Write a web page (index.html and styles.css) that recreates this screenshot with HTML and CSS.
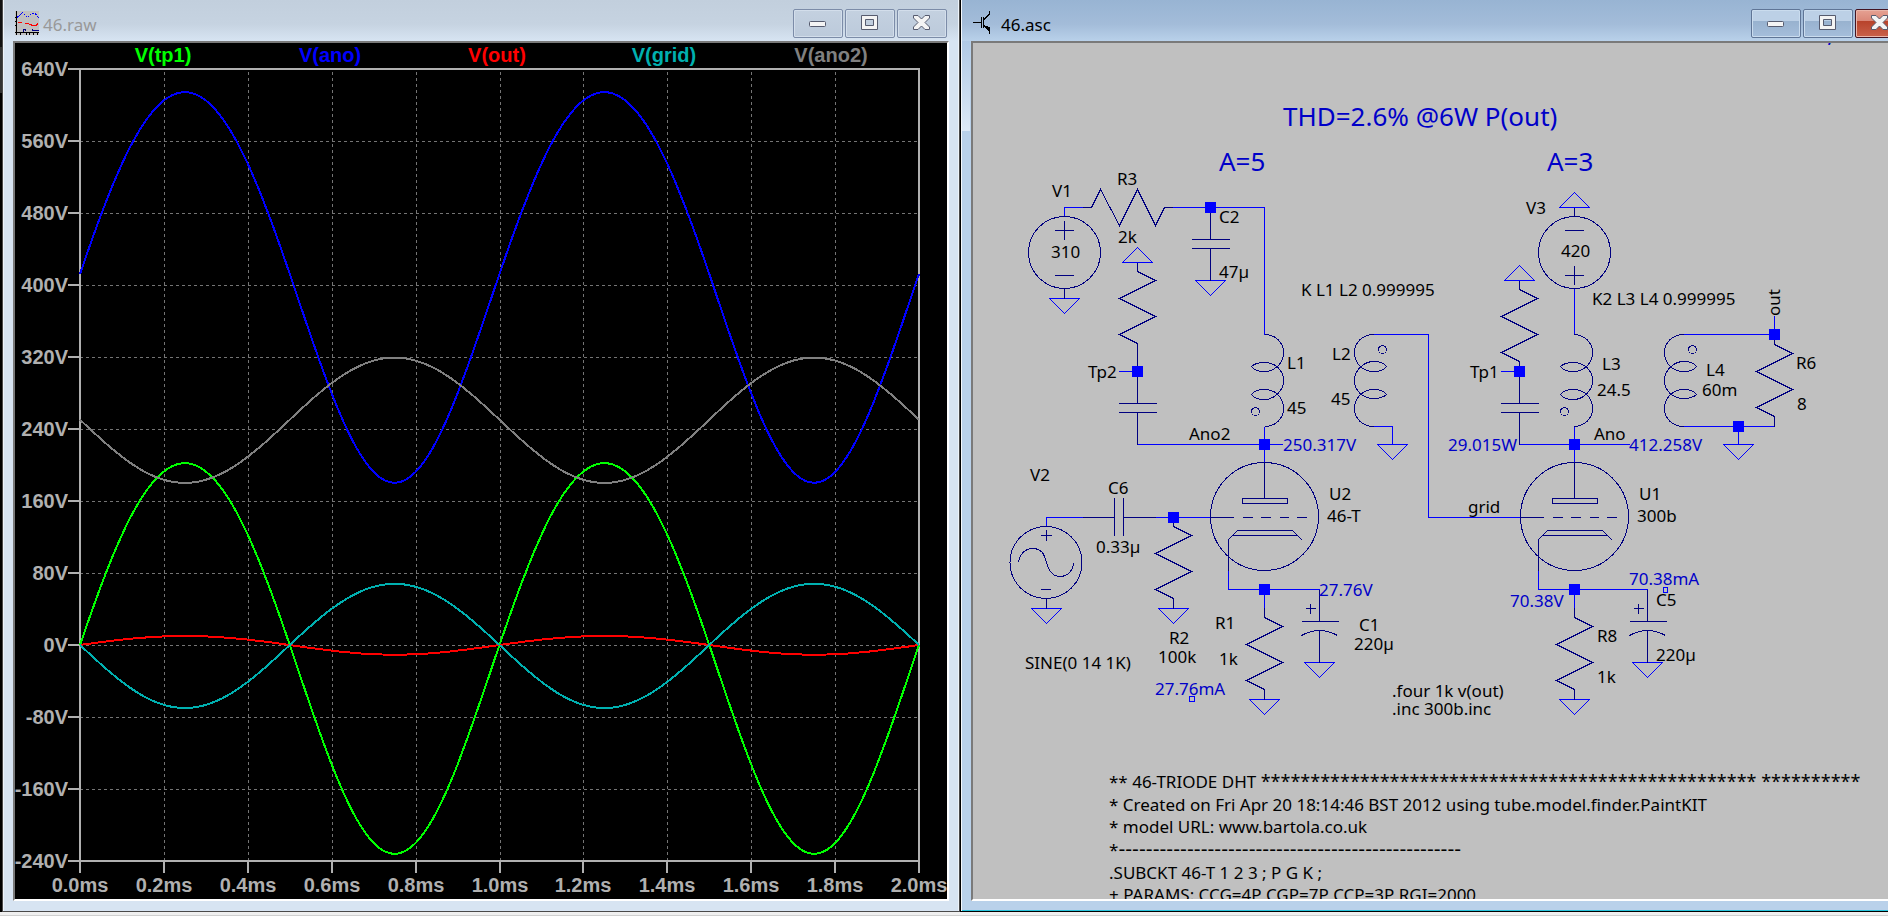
FILE: index.html
```html
<!DOCTYPE html>
<html lang="en">
<head>
    <meta charset="UTF-8">
    <meta name="viewport" content="width=device-width, initial-scale=1.0">
    <title>46.asc</title>
    <link rel="stylesheet" href="styles.css">
</head>
<body>
    <main class="desktop">
        <!-- Waveform window -->
        <section class="window inactive">
            <header class="titlebar">
                <svg class="app-icon" viewBox="0 0 24 24" shape-rendering="crispEdges" aria-hidden="true">
                    <rect width="24" height="24" fill="#c0c0c0"/>
                    <path d="M1.500 0V24M0 21.500H24M0 6.500H2M0 10.500H2M0 14.500H2M5.500 21V24M11.500 21V24M14.500 21V24M18.500 21V24M22.500 21V24" stroke="#000" fill="none"/>
                    <path d="M2 6.500L7.500 1.500L12.500 6.500L16.500 2.500H20L24 7" stroke="#0000ff" fill="none" stroke-dasharray="2 1"/>
                    <path d="M3 11.500H7M10 12.500H13L15 13.500L18 14.500H21L23 12.500" stroke="#ff0000" fill="none"/>
                    <path d="M8.500 21V18.500H10.500V20M17.500 18V20M17 19.500H24" stroke="#000080" fill="none"/>
                </svg>
                <h1 class="title">46.raw</h1>
                <div class="controls">
                    <button class="control" type="button" aria-label="Minimize">
                        <svg viewBox="1 0 20 20"><rect class="glyph" x="2.500" y="8.500" width="16" height="5" rx="1"/></svg>
                    </button>
                    <button class="control" type="button" aria-label="Maximize">
                        <svg viewBox="1 0 20 20"><path class="glyph" fill-rule="evenodd" d="M2.500 2.500H18.500V16.500H2.500ZM6.500 6.500V12.500H14.500V6.500Z"/></svg>
                    </button>
                    <button class="control close" type="button" aria-label="Close">
                        <svg viewBox="1 0 20 20"><path class="glyph" d="M2.500 2.500H7L10.500 6L14 2.500H18.500V5L14 9.500L18.500 14V16.500H14L10.500 13L7 16.500H2.500V14L7 9.500L2.500 5Z"/></svg>
                    </button>
                </div>
            </header>
            <div class="client plot">
                <svg id="plot" viewBox="15 43 932 856" preserveAspectRatio="xMinYMin meet" role="img" aria-label="Waveforms"></svg>
            </div>
        </section>

        <!-- Schematic window -->
        <section class="window active">
            <header class="titlebar">
                <svg class="app-icon" viewBox="0 0 24 24" shape-rendering="crispEdges" aria-hidden="true">
                    <path d="M0 11.500H8M8.500 6V17M10.500 6V17M11 8.500L16.500 3V0M11 14.500L16.500 20V23" stroke="#000" fill="none"/>
                    <path d="M12 15L17 16V21Z" fill="#000"/>
                </svg>
                <h1 class="title">46.asc</h1>
                <div class="controls">
                    <button class="control" type="button" aria-label="Minimize">
                        <svg viewBox="1 0 20 20"><rect class="glyph" x="2.500" y="8.500" width="16" height="5" rx="1"/></svg>
                    </button>
                    <button class="control" type="button" aria-label="Maximize">
                        <svg viewBox="1 0 20 20"><path class="glyph" fill-rule="evenodd" d="M2.500 2.500H18.500V16.500H2.500ZM6.500 6.500V12.500H14.500V6.500Z"/></svg>
                    </button>
                    <button class="control close" type="button" aria-label="Close">
                        <svg viewBox="1 0 20 20"><path class="glyph" d="M2.500 2.500H7L10.500 6L14 2.500H18.500V5L14 9.500L18.500 14V16.500H14L10.500 13L7 16.500H2.500V14L7 9.500L2.500 5Z"/></svg>
                    </button>
                </div>
            </header>
            <div class="client sheet">
                <svg viewBox="973 43 932 856" preserveAspectRatio="xMinYMin meet" role="img" aria-label="Schematic">
                    <defs>
                        <path id="gnd" d="M-15 0H15L0 15Z"/>
                        <path id="rail" d="M-15 0H15L0 -15Z"/>
                        <path id="res" d="M0 0L18 9L-18 27L18 45L-18 63L0 72V82"/>
                        <path id="cap" d="M-19 0H19M-19 9H19"/>
                        <path id="pcap" d="M0 -14V0M-18 0H19M-18 14Q0 4 18 14M0 9V41M-14 -13H-4M-9 -18V-8"/>
                        <g id="ind">
                            <path d="M0 0C11 0 19 8 19 18C19 30 9 37 0 37C-6 37 -11 35 -13 32C-11 30 -6 28 0 28C11 28 19 36 19 46C19 57 9 65 0 65C-6 65 -11 63 -13 60C-11 57 -6 55 0 55C11 55 19 63 19 74C19 84 11 92 0 92"/>
                            <circle cx="-9" cy="77" r="4"/>
                        </g>
                        <g id="triode">
                            <circle r="54"/>
                            <path d="M0 -54V-18M-22 -18H23V-13H-22ZM-54 1H-31M-22 1H-12M-4 1H6M15 1H24M32 1H42"/>
                            <path d="M-36 54V23L-27 14H28L38 24M-32 19H33"/>
                        </g>
                        <rect id="node" x="-5" y="-5" width="10" height="10"/>
                    </defs>

                    <g class="wire">
                        <path d="M1064.500 216.500V207.500H1084M1172 207.500H1264.500V334.500"/>
                        <path d="M1119 371.500H1137.500M1137.500 444.500H1283M1264.500 426.500V462"/>
                        <path d="M1373.500 334.500H1428.500V517.500H1520M1373.500 426.500H1392.500V444.500"/>
                        <path d="M1046.500 526.500V517.500H1084M1155 517.500H1210"/>
                        <path d="M1228.500 570V589.500H1319.500M1264.500 589.500V609"/>
                        <path d="M1574.500 288.500V334.500M1501 371.500H1519.500M1519.500 444.500H1630M1574.500 426.500V462"/>
                        <path d="M1682.500 334.500H1774.500V316M1682.500 426.500H1774.500M1738.500 426.500V444.500"/>
                        <path d="M1538.500 570V589.500H1647.500M1574.500 589.500V609"/>
                        <use href="#gnd" x="1064.500" y="298.500"/>
                        <use href="#gnd" x="1210.500" y="280.500"/>
                        <use href="#gnd" x="1392.500" y="444.500"/>
                        <use href="#gnd" x="1046.500" y="608.500"/>
                        <use href="#gnd" x="1173.500" y="608.500"/>
                        <use href="#gnd" x="1264.500" y="699.500"/>
                        <use href="#gnd" x="1319.500" y="662.500"/>
                        <use href="#gnd" x="1574.500" y="699.500"/>
                        <use href="#gnd" x="1647.500" y="662.500"/>
                        <use href="#gnd" x="1738.500" y="444.500"/>
                        <use href="#rail" x="1137.500" y="262.500"/>
                        <use href="#rail" x="1519.500" y="280.500"/>
                        <use href="#rail" x="1574.500" y="207.500"/>
                        <rect x="1189.500" y="696.500" width="5" height="5"/>
                        <rect x="1663.500" y="587.500" width="4" height="5"/>
                    </g>

                    <g class="part">
                        <!-- V1, R3, C2 -->
                        <circle cx="1064.500" cy="252.500" r="36"/>
                        <path d="M1064.500 221V240M1055 230.500H1074M1055 275.500H1074M1064.500 288.500V298.500"/>
                        <path d="M1083 207.500H1091.500L1100.500 189.500L1119.500 225.500L1137.500 189.500L1155.500 225.500L1164.500 207.500H1173"/>
                        <path d="M1210.500 213V239.500M1210.500 248.500V280.500"/>
                        <use href="#cap" x="1210.500" y="239.500"/>
                        <!-- Tp2 branch -->
                        <path d="M1137.500 262.500V271.500M1137.500 353V403.500M1137.500 412.500V444.500"/>
                        <use href="#res" x="1137.500" y="271.500"/>
                        <use href="#cap" x="1137.500" y="403.500"/>
                        <!-- Transformers -->
                        <use href="#ind" x="1264.500" y="334.500"/>
                        <use href="#ind" transform="translate(1373.500 426.500) rotate(180)"/>
                        <use href="#ind" x="1573.500" y="334.500"/>
                        <use href="#ind" transform="translate(1683.500 426.500) rotate(180)"/>
                        <!-- V2, C6, R2 -->
                        <circle cx="1046" cy="562.500" r="36"/>
                        <path d="M1046.500 530V541M1041 535.500H1052M1041 589.500H1051M1046.500 598.500V608.500"/>
                        <path d="M1018.500 562.500C1020 553 1026 548.500 1032.500 548.500C1040 548.500 1044 552 1046.500 562.500C1049 572 1053 576.500 1060 576.500C1068 576.500 1073.500 570 1073.500 562.500"/>
                        <path d="M1083 517.500H1114.500M1114.500 498V536M1123.500 498V536M1123.500 517.500H1156M1173.500 517.500V526.500"/>
                        <use href="#res" x="1173.500" y="526.500"/>
                        <!-- Tubes with cathode networks -->
                        <use href="#triode" x="1264.500" y="516.500"/>
                        <use href="#triode" x="1574.500" y="516.500"/>
                        <path d="M1264.500 608V617.500M1574.500 608V617.500M1319.500 589.500V608M1647.500 589.500V608"/>
                        <use href="#res" x="1264.500" y="617.500"/>
                        <use href="#res" x="1574.500" y="617.500"/>
                        <use href="#pcap" x="1319.500" y="621.500"/>
                        <use href="#pcap" x="1647.500" y="621.500"/>
                        <!-- V3, Tp1 branch, R6 -->
                        <circle cx="1574.500" cy="252.500" r="36"/>
                        <path d="M1574.500 207.500V216.500M1565 230.500H1584M1565 275.500H1584M1574.500 266V285"/>
                        <path d="M1519.500 280.500V289.500M1519.500 371V403.500M1519.500 412.500V444.500"/>
                        <use href="#res" x="1519.500" y="289.500"/>
                        <use href="#cap" x="1519.500" y="403.500"/>
                        <path d="M1774.500 334.500V344.500"/>
                        <use href="#res" x="1774.500" y="344.500"/>
                    </g>

                    <g class="nodes">
                        <use href="#node" x="1210.500" y="207.500"/>
                        <use href="#node" x="1137.500" y="371.500"/>
                        <use href="#node" x="1264.500" y="444.500"/>
                        <use href="#node" x="1173.500" y="517.500"/>
                        <use href="#node" x="1264.500" y="589.500"/>
                        <use href="#node" x="1519.500" y="371.500"/>
                        <use href="#node" x="1574.500" y="444.500"/>
                        <use href="#node" x="1574.500" y="589.500"/>
                        <use href="#node" x="1774.500" y="334.500"/>
                        <use href="#node" x="1738.500" y="426.500"/>
                    </g>

                    <g class="heading">
                        <text x="1283" y="126">THD=2.6% @6W P(out)</text>
                        <text x="1219" y="171">A=5</text>
                        <text x="1547" y="171">A=3</text>
                        <text x="1827" y="42">,</text>
                    </g>

                    <g class="label">
                        <text x="1052" y="197">V1</text>
                        <text x="1051" y="258">310</text>
                        <text x="1117" y="185">R3</text>
                        <text x="1118" y="243">2k</text>
                        <text x="1219" y="223">C2</text>
                        <text x="1219" y="278">47µ</text>
                        <text x="1301" y="296">K L1 L2 0.999995</text>
                        <text x="1526" y="214">V3</text>
                        <text x="1561" y="257">420</text>
                        <text x="1592" y="305">K2 L3 L4 0.999995</text>
                        <text transform="translate(1780 316) rotate(-90)">out</text>
                        <text x="1088" y="378">Tp2</text>
                        <text x="1287" y="369">L1</text>
                        <text x="1287" y="414">45</text>
                        <text x="1332" y="360">L2</text>
                        <text x="1331" y="405">45</text>
                        <text x="1189" y="440">Ano2</text>
                        <text x="1030" y="481">V2</text>
                        <text x="1108" y="494">C6</text>
                        <text x="1096" y="553">0.33µ</text>
                        <text x="1329" y="500">U2</text>
                        <text x="1327" y="522">46-T</text>
                        <text x="1215" y="629">R1</text>
                        <text x="1219" y="665">1k</text>
                        <text x="1169" y="644">R2</text>
                        <text x="1158" y="663">100k</text>
                        <text x="1025" y="669">SINE(0 14 1K)</text>
                        <text x="1359" y="631">C1</text>
                        <text x="1354" y="650">220µ</text>
                        <text x="1470" y="378">Tp1</text>
                        <text x="1602" y="370">L3</text>
                        <text x="1597" y="396">24.5</text>
                        <text x="1706" y="376">L4</text>
                        <text x="1702" y="396">60m</text>
                        <text x="1796" y="369">R6</text>
                        <text x="1797" y="410">8</text>
                        <text x="1594" y="440">Ano</text>
                        <text x="1468" y="513">grid</text>
                        <text x="1639" y="500">U1</text>
                        <text x="1637" y="522">300b</text>
                        <text x="1656" y="606">C5</text>
                        <text x="1656" y="661">220µ</text>
                        <text x="1597" y="642">R8</text>
                        <text x="1597" y="683">1k</text>
                        <text x="1392" y="697">.four 1k v(out)</text>
                        <text x="1392" y="715">.inc 300b.inc</text>
                        <text x="1109" y="788">** 46-TRIODE DHT <tspan class="stars">************************************************** **********</tspan></text>
                        <text x="1109" y="811">* Created on Fri Apr 20 18:14:46 BST 2012 using tube.model.finder.PaintKIT</text>
                        <text x="1109" y="833">* model URL: www.bartola.co.uk</text>
                        <text x="1109" y="856">*<tspan class="rule">--------------------------------------------------</tspan></text>
                        <text x="1109" y="879">.SUBCKT 46-T 1 2 3 ; P G K ;</text>
                        <text x="1109" y="901">+ PARAMS: CCG=4P CGP=7P CCP=3P RGI=2000</text>
                    </g>

                    <g class="label reading">
                        <text x="1283" y="451">250.317V</text>
                        <text x="1319" y="596">27.76V</text>
                        <text x="1155" y="695">27.76mA</text>
                        <text x="1448" y="451">29.015W</text>
                        <text x="1629" y="451">412.258V</text>
                        <text x="1629" y="585">70.38mA</text>
                        <text x="1510" y="607">70.38V</text>
                    </g>
                </svg>
            </div>
        </section>
    </main>
    <footer class="statusbar"></footer>

    <script src="plot.js"></script>
</body>
</html>
```
FILE: styles.css
```css
* {
    box-sizing: border-box;
}

body {
    margin: 0;
    height: 100vh;
    display: flex;
    flex-direction: column;
    overflow: hidden;
    background: #000;
    font-family: 'Noto Sans', sans-serif;
}

.desktop {
    flex: 1;
    min-height: 0;
    display: grid;
    grid-template-columns: 1fr 1fr;
    /* the right window runs past the edge of the screen */
    margin-right: -30px;
    padding-left: 2px;
    background: linear-gradient(#111 47px, #333 47px, #333 93px, #000 93px);
}

.window {
    display: flex;
    flex-direction: column;
    min-width: 0;
    min-height: 0;
    padding: 0 10px 10px;
    border: 1px solid #4a4a4a;
    border-top: 0;
}

.inactive {
    background: linear-gradient(#c2cfdd, #c6d3e1 24px, #d7e4f2 41px);
    box-shadow: inset 1px 0 #eef4fa, inset -1px 0 #eef4fa;
}

.active {
    /* light sheen down the left frame, over the title bar gradient */
    background:
        linear-gradient(#b0c9e5, #dde9f6) 0 41px / 9px 90px no-repeat,
        linear-gradient(#98b4d3, #a3bcd9 24px, #b9d1ea 41px);
    border-color: #000;
    box-shadow: inset 1px 0 #f4f8fc, inset 0 -1px #27c4dc;
}

/* title bar */
.titlebar {
    height: 41px;
    flex: none;
    display: flex;
    align-items: center;
    gap: 4px;
    padding: 5px 2px 0;
}

.app-icon {
    width: 24px;
    height: 24px;
}

.title {
    margin: 0;
    padding-top: 3px;
    flex: 1;
    font-size: 17px;
    font-weight: 400;
    line-height: 24px;
    color: #000;
}

.inactive .title {
    color: #999;
}

.controls {
    display: flex;
    gap: 2px;
}

.control {
    width: 50px;
    height: 29px;
    padding: 0;
    display: flex;
    align-items: center;
    justify-content: center;
    border: 1px solid #7c8ca8;
    border-radius: 2px;
    background: linear-gradient(#c4d1e0, #bccadb);
    box-shadow: inset 0 0 0 1px #d3deeb;
}

.control svg {
    width: 20px;
    height: 20px;
}

.active .control {
    border-color: #5f7596;
    background: linear-gradient(#bcd0e6 42%, #98b2cf 42%, #a5bedb);
    box-shadow: inset 0 0 0 1px #cadcee;
}

.active .close {
    border-color: #431422;
    background: linear-gradient(#e5a193, #d98676 42%, #b8432b 42%, #c9614a);
    box-shadow: inset 0 0 0 1px #eab5a9;
}

.glyph {
    fill: #f4f4f4;
    stroke: #565b6e;
}

/* window content */
.client {
    flex: 1;
    min-height: 0;
    border: 2px solid;
    border-color: #7a7a7a #fff #fff #7a7a7a;
    overflow: hidden;
}

.client svg {
    display: block;
    width: 100%;
    height: 100%;
}

.plot {
    background: #000;
}

.sheet {
    background: #c0c0c0;
}

/* waveforms */
.axis {
    fill: none;
    stroke: #b0b0b0;
    stroke-width: 2;
    shape-rendering: crispEdges;
}

.grid {
    fill: none;
    stroke: #747474;
    stroke-dasharray: 3 3;
    shape-rendering: crispEdges;
}

.trace {
    fill: none;
    stroke-width: 2;
    shape-rendering: crispEdges;
}

.tick,
.legend {
    font: bold 20px 'Liberation Sans', Arial, sans-serif;
    fill: #b0b0b0;
}

.legend,
.tick-x {
    text-anchor: middle;
}

.tick-y {
    text-anchor: end;
}

/* schematic */
.wire,
.part {
    fill: none;
    stroke: #0000ff;
    shape-rendering: crispEdges;
}

.part {
    stroke: #000080;
}

.nodes {
    fill: #0000ff;
    stroke: #0000ff;
    shape-rendering: crispEdges;
}

.label {
    font-size: 17px;
    fill: #000;
}

.heading {
    font-size: 26px;
    fill: #0000c8;
}

.reading {
    fill: #0000c8;
}

.stars {
    font-size: 18px;
}

.rule {
    font-family: 'DejaVu Sans', sans-serif;
    font-size: 19px;
}

.statusbar {
    flex: none;
    height: 4px;
    background: #f0f0f0;
    border-bottom: 1px solid #d0d0d0;
}
```
FILE: plot.js
```js
const LEFT = 80, RIGHT = 919, TOP = 69, BOTTOM = 861;
const T_MAX = 2, V_MAX = 640, V_MIN = -240;

const traces = [
    { name: 'V(tp1)',  color: '#00ff00', labelX: 163, dc: 0,      amp: 217,  second: -15 },
    { name: 'V(ano)',  color: '#0000ff', labelX: 330, dc: 412.26, amp: 217,  second: -15 },
    { name: 'V(out)',  color: '#ff0000', labelX: 497, dc: 0,      amp: 10.4, second: -0.4 },
    { name: 'V(grid)', color: '#00b0b0', labelX: 664, dc: 0,      amp: -69,  second: -1 },
    { name: 'V(ano2)', color: '#808080', labelX: 831, dc: 250.3,  amp: -69.6, second: -0.6 }
];

const plot = document.getElementById('plot');

function add(tag, attrs, text) {
    const el = document.createElementNS('http://www.w3.org/2000/svg', tag);
    for (const key in attrs) el.setAttribute(key, attrs[key]);
    if (text) el.textContent = text;
    plot.appendChild(el);
}

const toX = t => LEFT + t / T_MAX * (RIGHT - LEFT);
const toY = v => TOP + (V_MAX - v) / (V_MAX - V_MIN) * (BOTTOM - TOP);

// horizontal grid and voltage scale
for (let v = V_MAX; v >= V_MIN; v -= 80) {
    const y = toY(v);
    if (v < V_MAX && v > V_MIN) {
        add('path', { class: 'grid', d: `M${LEFT} ${y + 0.5}H${RIGHT}` });
    }
    add('path', { class: 'axis', d: `M68 ${y}H${LEFT}` });
    add('text', { class: 'tick tick-y', x: 68, y: y + 7 }, v + 'V');
}

// vertical grid and time scale
for (let i = 0; i <= 10; i++) {
    const x = Math.round(toX(i / 5));
    if (i > 0 && i < 10) {
        add('path', { class: 'grid', d: `M${x + 0.5} ${BOTTOM}V${TOP}` });
    }
    add('path', { class: 'axis', d: `M${x} ${BOTTOM}V873` });
    add('text', { class: 'tick tick-x', x: x, y: 892 }, (i / 5).toFixed(1) + 'ms');
}

add('path', { class: 'axis', d: `M${LEFT} ${TOP}H${RIGHT}V${BOTTOM}H${LEFT}Z` });

for (const trace of traces) {
    const points = [];
    for (let i = 0; i <= 200; i++) {
        const t = i / 200 * T_MAX;
        const s = Math.sin(2 * Math.PI * t);
        const v = trace.dc + trace.amp * s + trace.second * s * s;
        points.push(toX(t).toFixed(1) + ',' + toY(v).toFixed(1));
    }
    add('polyline', { class: 'trace', points: points.join(' '), stroke: trace.color });
    add('text', { class: 'legend', x: trace.labelX, y: 62, style: 'fill:' + trace.color }, trace.name);
}
```
